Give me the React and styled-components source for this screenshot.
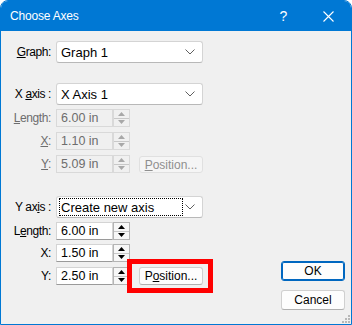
import React from "react";
import styled, { createGlobalStyle, css } from "styled-components";

const Global = createGlobalStyle`
  html, body { margin: 0; padding: 0; background: #ffffff; }
  body { font-family: "Liberation Sans", Arial, sans-serif; font-size: 12px; color: #000; }
  * { box-sizing: border-box; }
`;

const Window = styled.div`
  width: 352px;
  height: 325px;
  border: 1px solid #0078d4;
  border-radius: 8px 8px 0 0;
  background: #f0f0f0;
  display: flex;
  flex-direction: column;
  overflow: hidden;
`;

const TitleBar = styled.div`
  height: 30px;
  background: #0078d4;
  color: #fff;
  display: flex;
  align-items: center;
  padding-left: 9px;
  font-size: 12px;
`;

const Title = styled.div`
  flex: 1;
  letter-spacing: -0.2px;
`;

const TitleButton = styled.div`
  width: 45px;
  height: 30px;
  display: flex;
  align-items: center;
  justify-content: center;
  font-size: 14px;
  color: #fff;
`;

const Body = styled.div`
  flex: 1;
  display: flex;
  position: relative;
`;

const LeftCol = styled.div`
  display: flex;
  flex-direction: column;
  padding-top: 10px;
`;

const RightCol = styled.div`
  margin-left: auto;
  display: flex;
  flex-direction: column;
  justify-content: flex-end;
  gap: 9px;
  padding: 0 6px 14px 0;
`;

const Row = styled.div`
  display: grid;
  grid-template-columns: 50px auto;
  column-gap: 5px;
  align-items: center;
  margin-top: ${(p) => p.$mt || 0}px;
`;

const Label = styled.div`
  text-align: right;
  letter-spacing: -0.4px;
  color: ${(p) => (p.$disabled ? "#6d6d6d" : "#000")};
  white-space: pre;
`;

const U = styled.span`
  text-decoration: underline;
  text-underline-offset: 1px;
`;

const Combo = styled.div`
  width: 147px;
  height: ${(p) => p.$h || 22}px;
  background: #fff;
  border: 1px solid #d4d4d4;
  border-bottom-color: #b8b8b8;
  border-radius: 3px;
  display: flex;
  align-items: center;
  padding: 1px 0 1px 2px;
`;

const ComboText = styled.div`
  flex: 1;
  height: 100%;
  display: flex;
  align-items: center;
  padding-left: 1px;
  font-size: 13px;
  border: 1px solid transparent;
  ${(p) =>
    p.$focused &&
    css`
      border: 1px dotted #000;
      margin-right: 2px;
    `}
`;

const Chevron = styled.svg`
  width: 10px;
  height: 6px;
  margin-right: 7px;
  flex: none;
`;

const Controls = styled.div`
  display: flex;
  align-items: center;
`;

const SpinBox = styled.div`
  display: flex;
  width: 74px;
  height: 18px;
`;

const SpinText = styled.div`
  width: 57px;
  height: 18px;
  border: 1px solid ${(p) => (p.$disabled ? "#d9d9d9" : "#d4d4d4")};
  border-bottom-color: ${(p) => (p.$disabled ? "#d9d9d9" : "#9a9a9a")};
  background: ${(p) => (p.$disabled ? "#f0f0f0" : "#fff")};
  color: ${(p) => (p.$disabled ? "#6d6d6d" : "#000")};
  padding-left: 4px;
  display: flex;
  align-items: center;
  font-size: 12.5px;
`;

const SpinButtons = styled.div`
  width: 17px;
  height: 18px;
  display: flex;
  flex-direction: column;
  border: 1px solid ${(p) => (p.$disabled ? "#d9d9d9" : "#b4b4b4")};
  background: ${(p) => (p.$disabled ? "#f0f0f0" : "#f7f7f7")};
`;

const SpinHalf = styled.div`
  flex: 1;
  display: flex;
  align-items: center;
  justify-content: center;
  & + & {
    border-top: 1px solid ${(p) => (p.$disabled ? "#e0e0e0" : "#c8c8c8")};
  }
`;

const Arrow = styled.svg`
  width: 7px;
  height: 4px;
`;

const PushButton = styled.div`
  margin-left: 9px;
  width: 64px;
  height: ${(p) => p.$h || 18}px;
  border: 1px solid ${(p) => (p.$disabled ? "#e0e0e0" : "#cfcfcf")};
  border-bottom-color: ${(p) => (p.$disabled ? "#e0e0e0" : "#b0b0b0")};
  border-radius: 3px;
  background: ${(p) => (p.$disabled ? "#f5f5f5" : "#fdfdfd")};
  color: ${(p) => (p.$disabled ? "#8f8f8f" : "#000")};
  display: flex;
  align-items: center;
  justify-content: center;
  font-size: 12px;
  align-self: ${(p) => (p.$disabled ? "flex-end" : "center")};
`;

const Highlight = styled.div`
  position: relative;
  display: flex;
  &::after {
    content: "";
    position: absolute;
    left: -3px;
    right: -10px;
    top: -8px;
    bottom: -8px;
    border: 5px solid #ff0000;
    pointer-events: none;
  }
`;

const DialogButton = styled.div`
  width: 64px;
  height: 20px;
  border-radius: 3px;
  background: #fdfdfd;
  border: 1px solid ${(p) => (p.$default ? "#0067c0" : "#d0d0d0")};
  border-bottom-color: ${(p) => (p.$default ? "#0067c0" : "#b0b0b0")};
  box-shadow: ${(p) => (p.$default ? "inset 0 0 0 1px #0067c0" : "none")};
  display: flex;
  align-items: center;
  justify-content: center;
  font-size: 12px;
`;

const Grip = styled.svg`
  position: absolute;
  right: 1px;
  bottom: 1px;
  width: 8px;
  height: 8px;
`;

const ChevronIcon = () => (
  <Chevron viewBox="0 0 10 6">
    <path d="M0.5 0.5 L5 5 L9.5 0.5" fill="none" stroke="#606060" strokeWidth="1" />
  </Chevron>
);

const Spinner = ({ value, disabled }) => {
  const c = disabled ? "#a8a8a8" : "#000";
  return (
    <SpinBox>
      <SpinText $disabled={disabled}>{value}</SpinText>
      <SpinButtons $disabled={disabled}>
        <SpinHalf $disabled={disabled}>
          <Arrow viewBox="0 0 7 4">
            <path d="M0 4 L3.5 0 L7 4 Z" fill={c} />
          </Arrow>
        </SpinHalf>
        <SpinHalf $disabled={disabled}>
          <Arrow viewBox="0 0 7 4">
            <path d="M0 0 L3.5 4 L7 0 Z" fill={c} />
          </Arrow>
        </SpinHalf>
      </SpinButtons>
    </SpinBox>
  );
};

export default function App() {
  return (
    <>
      <Global />
      <Window>
        <TitleBar>
          <Title>Choose Axes</Title>
          <TitleButton>?</TitleButton>
          <TitleButton>
            <svg width="11" height="11" viewBox="0 0 11 11">
              <path d="M0.5 0.5 L10.5 10.5 M10.5 0.5 L0.5 10.5" stroke="#fff" strokeWidth="1.1" />
            </svg>
          </TitleButton>
        </TitleBar>
        <Body>
          <LeftCol>
            <Row>
              <Label>
                <U>G</U>raph:
              </Label>
              <Combo>
                <ComboText>Graph 1</ComboText>
                <ChevronIcon />
              </Combo>
            </Row>
            <Row $mt={20}>
              <Label>
                X <U>a</U>xis :
              </Label>
              <Combo>
                <ComboText>X Axis 1</ComboText>
                <ChevronIcon />
              </Combo>
            </Row>
            <Row $mt={4}>
              <Label $disabled>
                <U>L</U>ength:
              </Label>
              <Spinner value="6.00 in" disabled />
            </Row>
            <Row $mt={5}>
              <Label $disabled>
                <U>X</U>:
              </Label>
              <Spinner value="1.10 in" disabled />
            </Row>
            <Row $mt={5}>
              <Label $disabled>
                <U>Y</U>:
              </Label>
              <Controls>
                <Spinner value="5.09 in" disabled />
                <PushButton $disabled $h={17}>
                  <U>P</U>osition...
                </PushButton>
              </Controls>
            </Row>
            <Row $mt={23}>
              <Label>
                Y ax<U>i</U>s :
              </Label>
              <Combo $h={22}>
                <ComboText $focused>Create new axis</ComboText>
                <ChevronIcon />
              </Combo>
            </Row>
            <Row $mt={4}>
              <Label>
                L<U>e</U>ngth:
              </Label>
              <Spinner value="6.00 in" />
            </Row>
            <Row $mt={4}>
              <Label>X:</Label>
              <Spinner value="1.50 in" />
            </Row>
            <Row $mt={5}>
              <Label>Y:</Label>
              <Controls>
                <Spinner value="2.50 in" />
                <Highlight>
                  <PushButton>
                    P<U>o</U>sition...
                  </PushButton>
                </Highlight>
              </Controls>
            </Row>
          </LeftCol>
          <RightCol>
            <DialogButton $default>OK</DialogButton>
            <DialogButton>Cancel</DialogButton>
          </RightCol>
          <Grip viewBox="0 0 8 8">
            <rect x="6" y="0" width="2" height="2" fill="#b8b8b8" />
            <rect x="3" y="3" width="2" height="2" fill="#b8b8b8" />
            <rect x="6" y="3" width="2" height="2" fill="#b8b8b8" />
            <rect x="0" y="6" width="2" height="2" fill="#b8b8b8" />
            <rect x="3" y="6" width="2" height="2" fill="#b8b8b8" />
            <rect x="6" y="6" width="2" height="2" fill="#b8b8b8" />
          </Grip>
        </Body>
      </Window>
    </>
  );
}
